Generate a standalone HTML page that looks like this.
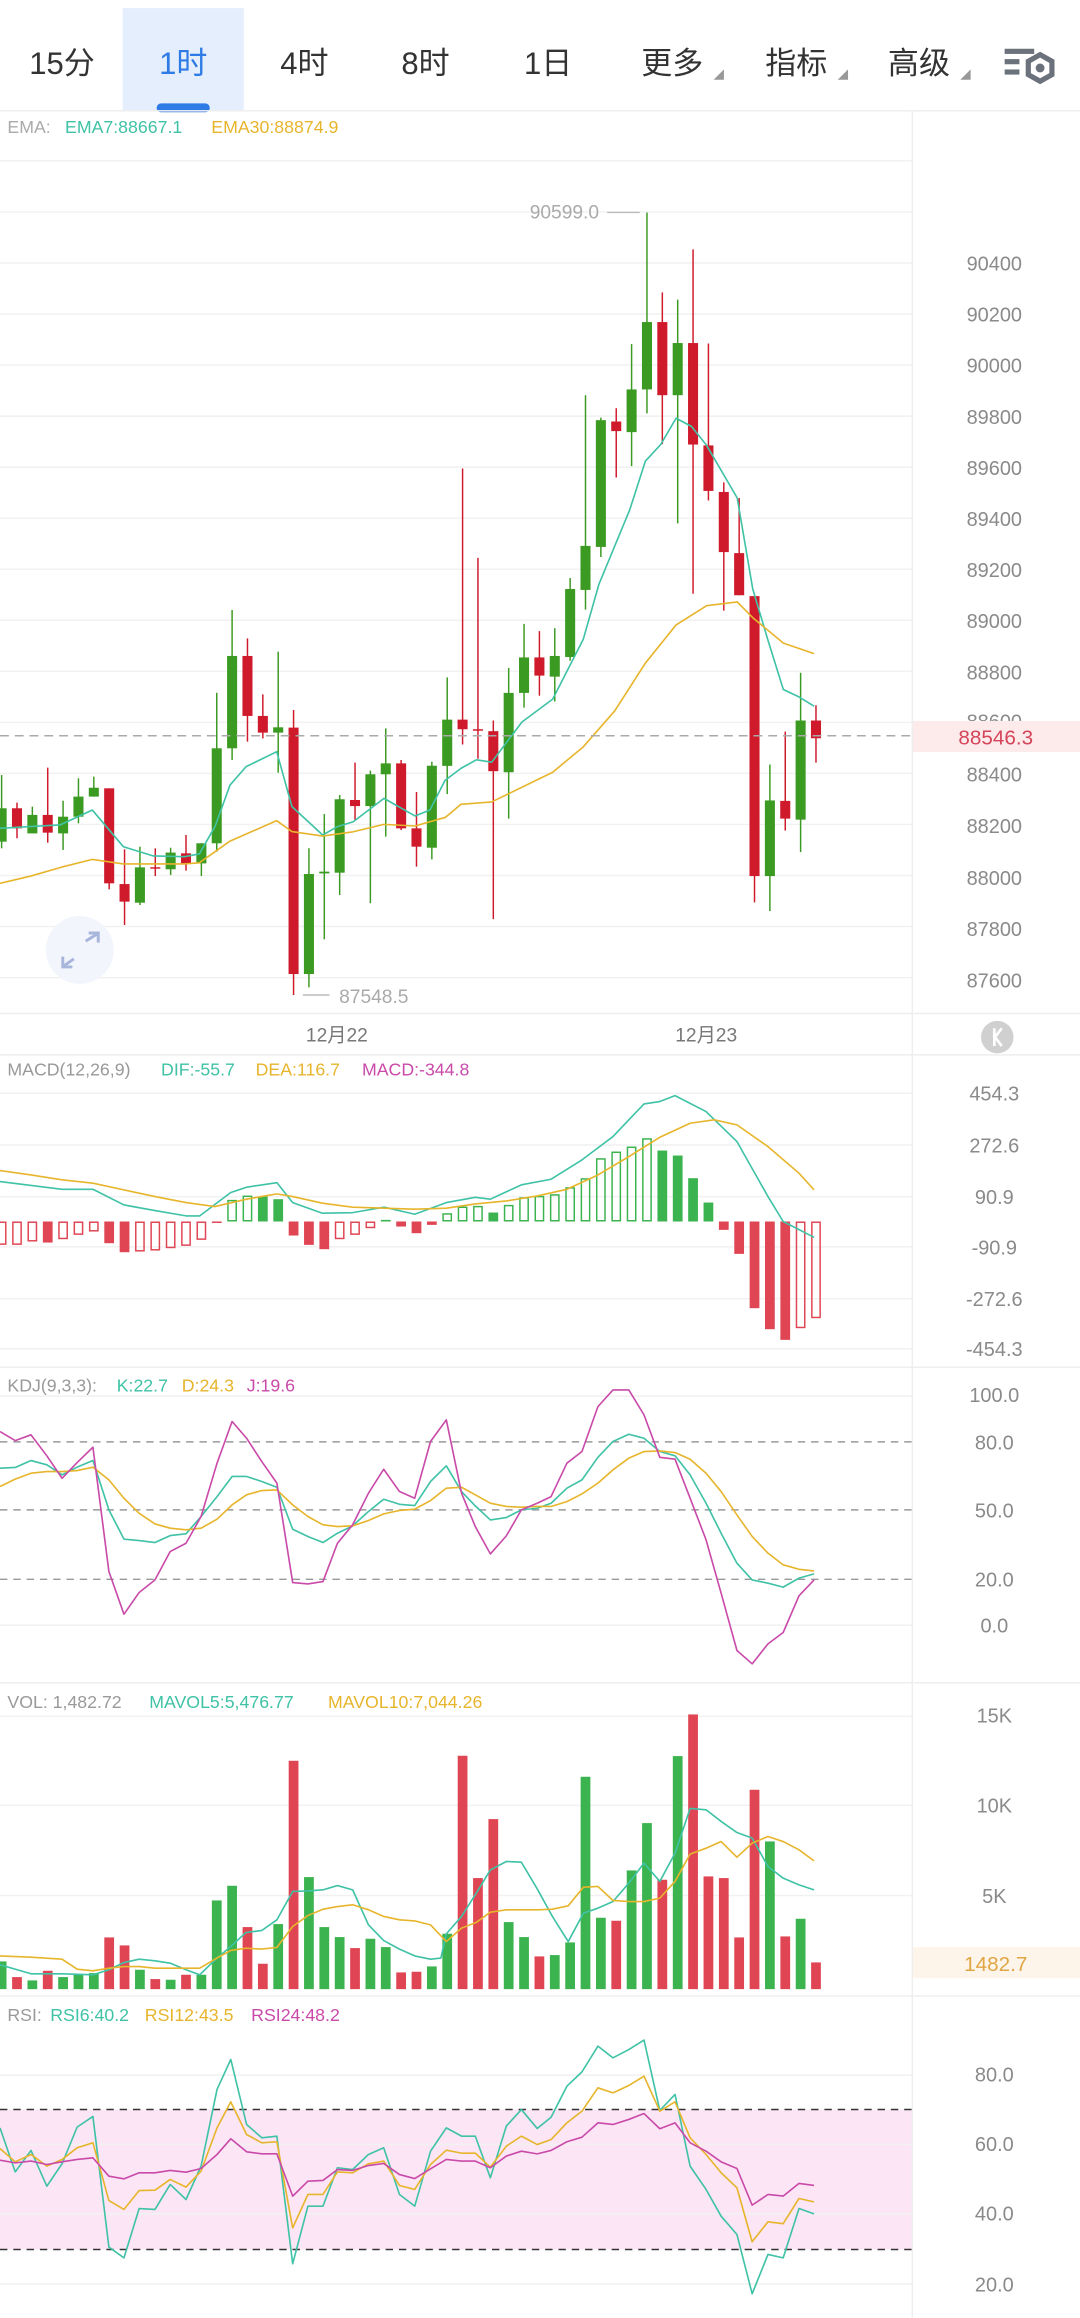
<!DOCTYPE html>
<html><head><meta charset="utf-8">
<style>
html,body{margin:0;padding:0;background:#fff;}
svg{display:block;}
text{font-family:"Liberation Sans","Noto Sans CJK SC",sans-serif;}
</style></head>
<body>
<svg id="s" xmlns="http://www.w3.org/2000/svg" width="1080" height="2318" viewBox="0 0 731 1569" preserveAspectRatio="none">
<rect width="731" height="1569" fill="#fff"/>
<!-- tab bar -->
<rect x="83" y="5.5" width="82" height="69" fill="#e4eefc"/>
<rect x="106" y="70" width="36" height="6" rx="3" fill="#2f7be5"/>
<g font-size="21" fill="#333" text-anchor="middle">
<text x="42" y="50">15分</text>
<text x="124" y="50" fill="#2f7be5">1时</text>
<text x="206" y="50">4时</text>
<text x="288" y="50">8时</text>
<text x="371" y="50">1日</text>
<text x="455" y="50">更多</text>
<text x="539" y="50">指标</text>
<text x="622" y="50">高级</text>
</g>
<g fill="#999"><path d="M483 54 L490 54 L490 47Z"/><path d="M567 54 L574 54 L574 47Z"/><path d="M650 54 L657 54 L657 47Z"/></g>
<g fill="#6b727c"><rect x="680" y="33" width="20" height="3.5"/><rect x="680" y="40" width="10" height="3.5"/><rect x="680" y="47" width="10" height="3.5"/>
<path d="M704 37 L712 41.5 L712 50.5 L704 55 L696 50.5 L696 41.5Z" fill="none" stroke="#6b727c" stroke-width="3.5"/><circle cx="704" cy="46" r="3"/></g>
<rect x="0" y="74.5" width="731" height="1" fill="#eee"/>
<g id="dyn"></g>
</svg>
<script>
var NS="http://www.w3.org/2000/svg",g=document.getElementById('dyn');
function el(t,a,txt){var e=document.createElementNS(NS,t);for(var k in a)e.setAttribute(k,a[k]);if(txt!=null)e.textContent=txt;g.appendChild(e);return e;}
function line(x1,y1,x2,y2,c,w,d){var a={x1:x1,y1:y1,x2:x2,y2:y2,stroke:c,'stroke-width':w||1};if(d)a['stroke-dasharray']=d;el('line',a);}
function txt(x,y,s,c,fs,anc){el('text',{x:x,y:y,fill:c,'font-size':fs||12,'text-anchor':anc||'start'},s);}
function poly(pts,Y0,c){var s=pts.map(function(p){return (p[0]/2.145).toFixed(1)+','+((Y0+p[1]/3)/1.4775).toFixed(1);}).join(' ');el('polyline',{points:s,fill:'none',stroke:c,'stroke-width':1.1,'stroke-linejoin':'round'});}
var TEAL='#3fc2a6',GOLD='#e7b52c',MAG='#c94aa9',GR='#3b9a21',RD='#cf1a2c',VG='#3bb34f',VR='#e04553',LG='#f1f1f1',AX='#8a8a8a';
// RSI band
el('rect',{x:0,y:1427.9,width:617,height:94.7,fill:'#fce6f5'});
// vertical divider
line(617.5,75,617.5,1569,'#eee',1);
// separators
[686,714,925.5,1139,1351].forEach(function(y){line(0,y,731,y,'#eee',1);});
// main gridlines
for(var k=-2;k<=14;k++){var y=178+k*34.55;if(y>100&&y<680)line(0,y,617,y,LG,1);}
var pl=[[90400,178],[90200,212.5],[90000,247],[89800,282],[89600,316.5],[89400,351],[89200,385.5],[89000,420],[88800,455],[88600,488],[88400,524],[88200,559],[88000,594],[87800,628.5],[87600,663.5]];
pl.forEach(function(p){txt(673,p[1]+5,String(p[0]),AX,13.5,'middle');});
txt(5,90,'EMA: ','#aaa',12);txt(44,90,'EMA7:88667.1',TEAL,12);txt(143,90,'EMA30:88874.9',GOLD,12);
// candles
var C=[[547.1,569.7,524.6,574.2,1],[547.1,560.7,543.3,567.4,0],[551.6,564.1,546,564.1,1],[551.6,563.6,519.6,570.4,0],[552.8,564.1,542,575.3,1],[539.2,552.8,526.8,557.3,1],[533.2,539.2,525.7,539.2,1],[533.6,597.9,533.6,602,0],[598.4,610.3,574.9,626.1,0],[587.1,611,573.1,612.6,1],[587,588,574.2,593,0],[577.1,588.4,573.8,592.3,1],[577.6,584.4,565.2,589.3,0],[570.8,584.4,570.8,593,1],[506.5,570.8,468.9,576.5,1],[444,506.5,412.9,514.4,1],[444,484.6,432.1,502,0],[484.6,495.9,470,499.8,0],[492.3,495.9,441.1,523,1],[492.5,659.3,480.6,673.5,0],[591.6,659.3,574.2,668.3,1],[590,591.2,551,635.8,1],[541,590.7,538.1,605.8,1],[541.5,545.6,516.2,555,0],[524.1,545.6,521.6,611.4,1],[516.7,524.1,493,566.3,1],[516.7,560.7,514.4,561.8,0],[560.7,573.1,536.1,586.6,0],[518.3,573.8,515.6,581.7,1],[487.1,518.4,458.5,537.5,1],[487.1,493.6,317.1,503.9,0],[493.6,494.6,377.6,513.6,0],[494.9,522,487.7,622.1,0],[469,522.7,452.1,554.1,1],[445,469,422.3,479,1],[445,457.3,427.2,470.9,0],[444,458,425.2,474.8,1],[398.7,444.7,391.2,447.2,1],[369.5,399.3,267.5,412.6,1],[284.4,370.2,282.7,377,1],[285.3,291.8,276.3,323.2,0],[263.6,292.5,232.9,315.5,1],[218,263.6,143.8,279.8,1],[218,267.5,197.9,300.6,0],[232.2,267.5,202.8,354.3,1],[232.2,300.9,168.8,401.9,0],[301.5,332.3,232.5,338.8,0],[333,373.7,326.5,413.3,0],[374.4,402.9,337.1,402.9,0],[403.5,593,403.5,610.8,0],[541.8,593,517.5,616.6,1],[542.1,554.1,495.2,562.2,0],[487.7,554.8,455.4,576.8,1],[487.7,499.7,477.4,516.2,0]];
function X(i){return 1.1+i*10.4;}
C.forEach(function(c,i){var x=X(i),col=c[4]?GR:RD;line(x,c[2],x,c[3],col,1);el('rect',{x:x-3.4,y:c[0],width:6.8,height:Math.max(1,c[1]-c[0]),fill:col});});
function pl2(pts,c){el('polyline',{points:pts.map(function(p){return p.join(',');}).join(' '),fill:'none',stroke:c,'stroke-width':1.1,'stroke-linejoin':'round'});}
pl2([[0,560.7],[20.3,559.5],[40.6,558.4],[62.5,548.3],[83.5,573.1],[103.8,579.4],[124.8,579.9],[134.9,578],[145.5,559.5],[155.7,531.4],[166.5,519],[187.3,508.8],[197.6,546],[218.4,565.2],[228.5,559.5],[239.1,556.2],[259.9,540.4],[280.9,552.3],[291,548.3],[301.2,528.2],[312,520.1],[322.4,514.3],[332.8,515.9],[353.3,488.7],[374.1,473.2],[394.8,432.7],[405.4,395.4],[426.2,345.2],[436.8,312.2],[447.2,300.9],[457.6,283.1],[468,288.6],[478.3,301.5],[499,337.1],[509.5,398.7],[519.6,432.7],[530.2,466.7],[540.4,471.5],[551,478]],TEAL);
pl2([[0,597.9],[20.8,593],[41.5,587],[62.5,581.7],[83.5,584.8],[124.8,584.8],[134.9,584],[155.7,569.3],[187.3,555.5],[197.6,562.9],[218.4,565.9],[239.1,563],[259.9,558],[280.9,559.1],[301.6,553.2],[312,544.4],[332.8,542.8],[374.1,522.7],[394.8,505.5],[416,481.3],[436.8,448.9],[457.6,423],[478.3,410],[499,407.4],[509.5,418.1],[530.2,435.3],[551,442.4]],GOLD);
// current price
line(0,498,617,498,'#aaa',1,'6 4');
el('rect',{x:618,y:488,width:113,height:21,fill:'#fdeaea'});
txt(674,504,'88546.3','#d4455a',14,'middle');
// max/min labels
txt(382,148,'90599.0','#aaa',13,'middle');line(411,143.8,433,143.8,'#bbb',1);
txt(253,679,'87548.5','#aaa',13,'middle');line(205,673.5,223,673.5,'#bbb',1);
// expand icon
el('circle',{cx:54,cy:643,r:23,fill:'#f2f5fb'});
el('path',{d:'M58 637 L66 632 M60 631.5 L66.5 631.5 L66.5 638 M50 649 L43 654 M42.5 647.5 L42.5 654.5 L49 654.5',stroke:'#a9b6dc','stroke-width':2,fill:'none'});
// dates
txt(228,705,'12月22','#777',13,'middle');txt(478,705,'12月23','#777',13,'middle');
el('circle',{cx:675,cy:702,r:11,fill:'#d0d0d0'});
el('path',{d:'M673 696 L673 708 M678 696 L673.5 702 L678 708',stroke:'#fff','stroke-width':1.8,fill:'none'});
// MACD
[740,775,810,844,879,913].forEach(function(y){line(0,y,617,y,LG,1);});
[['454.3',740],['272.6',775],['90.9',810],['-90.9',844],['-272.6',879],['-454.3',913]].forEach(function(p){txt(673,p[1]+5,p[0],AX,13.5,'middle');});
txt(5,728,'MACD(12,26,9)','#999',12);txt(109,728,'DIF:-55.7',TEAL,12);txt(173,728,'DEA:116.7',GOLD,12);txt(245,728,'MACD:-344.8',MAG,12);
var M=[[735,'h'],[735,'h'],[725,'h'],[728,'s'],[718,'h'],[705,'h'],[695,'h'],[730,'s'],[757,'s'],[755,'h'],[752,'h'],[745,'h'],[738,'h'],[720,'h'],[668,'s'],[600,'h'],[587,'h'],[590,'s'],[598,'s'],[707,'s'],[735,'s'],[748,'s'],[718,'h'],[705,'h'],[685,'h'],[660,'s'],[680,'s'],[700,'s'],[675,'s'],[640,'h'],[620,'h'],[618,'h'],[638,'s'],[615,'h'],[592,'h'],[588,'h'],[583,'h'],[562,'h'],[535,'h'],[475,'h'],[455,'h'],[440,'h'],[415,'h'],[452,'s'],[467,'s'],[535,'s'],[608,'s'],[690,'s'],[762,'s'],[925,'s'],[988,'s'],[1020,'s'],[985,'h'],[955,'h']];
var Z=826.8;
M.forEach(function(m,i){var y=676.8+m[0]/4.4325,x=X(i),col=y>Z?VR:VG,t=Math.min(y,Z),h=Math.max(1,Math.abs(y-Z));
 if(m[1]=='s')el('rect',{x:x-3.3,y:t,width:6.6,height:h,fill:col});else el('rect',{x:x-2.8,y:t+0.5,width:5.6,height:Math.max(0.5,h-1),fill:'none',stroke:col,'stroke-width':1});});
poly([[0,545],[90,568],[135,568],[180,615],[225,632],[270,648],[290,648],[335,578],[358,562],[402,548],[425,608],[468,640],[512,638],[558,622],[602,643],[648,608],[690,592],[712,598],[757,555],[800,538],[845,480],[890,410],[935,312],[958,305],[980,287],[1025,335],[1070,425],[1115,590],[1137,665],[1182,712]],1000,TEAL);
poly([[0,512],[45,525],[90,540],[135,550],[180,570],[225,590],[270,608],[312,620],[358,598],[402,582],[425,590],[468,610],[512,622],[558,625],[602,628],[648,625],[690,612],[735,603],[780,588],[823,568],[868,525],[913,470],[958,412],[1002,370],[1037,360],[1070,375],[1115,440],[1160,520],[1182,570]],1000,GOLD);
// KDJ
line(0,945,617,945,LG,1);line(0,1100,617,1100,LG,1);
[976,1022,1069].forEach(function(y){line(0,y,617,y,'#999',1,'5 4');});
[['100.0',944],['80.0',976],['50.0',1022],['20.0',1069],['0.0',1100]].forEach(function(p){txt(673,p[1]+5,p[0],AX,13.5,'middle');});
txt(5,942,'KDJ(9,3,3):','#999',12);txt(79,942,'K:22.7',TEAL,12);txt(123,942,'D:24.3',GOLD,12);txt(167,942,'J:19.6',MAG,12);
poly([[0,295],[22,293],[45,272],[68,285],[90,315],[112,292],[135,272],[158,420],[180,508],[202,512],[225,518],[247,497],[270,492],[292,440],[315,380],[337,320],[358,320],[380,335],[402,352],[425,478],[447,500],[469,518],[490,490],[512,468],[535,425],[557,388],[580,403],[602,407],[625,335],[648,288],[670,365],[690,408],[712,450],[735,443],[757,420],[780,415],[800,400],[823,355],[845,330],[868,262],[890,215],[913,193],[935,205],[958,245],[980,258],[1002,315],[1025,400],[1047,490],[1070,580],[1092,630],[1115,640],[1137,652],[1160,625],[1182,612]],1370,TEAL);
poly([[0,350],[22,328],[45,310],[68,305],[90,305],[112,302],[135,292],[158,330],[180,385],[202,430],[225,462],[247,475],[270,480],[292,475],[315,448],[337,405],[358,375],[380,362],[402,360],[425,405],[447,440],[469,465],[490,470],[512,468],[535,452],[557,432],[580,422],[602,418],[625,392],[648,355],[670,352],[690,375],[712,400],[735,410],[757,412],[780,410],[800,410],[823,395],[845,372],[868,340],[890,300],[913,265],[935,245],[958,243],[980,248],[1002,268],[1025,310],[1047,365],[1070,435],[1092,500],[1115,550],[1137,585],[1160,598],[1182,603]],1370,GOLD);
poly([[0,185],[22,212],[45,195],[68,258],[90,325],[112,278],[135,232],[158,605],[180,733],[202,668],[225,630],[247,545],[270,520],[292,440],[315,280],[337,155],[358,205],[380,275],[402,340],[425,638],[447,642],[469,635],[490,520],[512,465],[535,370],[557,298],[580,365],[602,385],[625,215],[648,150],[670,370],[690,470],[712,552],[735,498],[757,420],[780,400],[800,380],[823,280],[845,245],[868,110],[890,60],[913,60],[935,135],[958,262],[980,268],[1002,385],[1025,510],[1047,670],[1070,842],[1092,882],[1115,822],[1137,788],[1160,678],[1182,630]],1370,MAG);
// VOL
[1161.8,1222,1283].forEach(function(y){line(0,y,617,y,LG,1);});
[['15K',1161],['10K',1222],['5K',1283]].forEach(function(p){txt(673,p[1]+5,p[0],AX,13.5,'middle');});
el('rect',{x:618,y:1318,width:113,height:21,fill:'#fdf5ea'});txt(674,1334,'1482.7','#e0a545',14,'middle');
txt(5,1156,'VOL: 1,482.72','#999',12);txt(101,1156,'MAVOL5:5,476.77',TEAL,12);txt(222,1156,'MAVOL10:7,044.26',GOLD,12);
var V=[[845,1],[892,0],[902,1],[873,0],[892,1],[885,1],[880,1],[773,0],[797,0],[870,1],[898,0],[900,1],[885,0],[885,1],[662,1],[618,1],[742,0],[852,0],[733,1],[243,0],[592,1],[742,1],[772,1],[805,0],[777,1],[802,1],[878,0],[876,0],[860,1],[762,1],[228,0],[595,0],[418,0],[727,1],[772,1],[830,0],[826,1],[788,1],[291,1],[714,1],[723,0],[572,1],[430,1],[600,0],[229,1],[104,0],[590,0],[595,0],[773,0],[330,0],[485,1],[770,0],[717,1],[848,0]];
V.forEach(function(v,i){var y=1137+v[0]/4.4325;el('rect',{x:X(i)-3.3,y:y,width:6.6,height:1346.4-y,fill:v[1]?VG:VR});});
poly([[0,855],[45,882],[90,882],[135,885],[158,870],[180,848],[202,838],[225,843],[247,850],[270,870],[290,885],[312,840],[335,800],[357,758],[380,752],[402,720],[425,635],[447,633],[469,630],[490,617],[512,630],[535,735],[557,782],[580,808],[602,828],[625,838],[640,835],[648,762],[670,710],[692,638],[712,570],[735,545],[757,547],[780,627],[802,710],[825,785],[847,700],[868,685],[890,665],[913,610],[935,550],[958,605],[980,520],[1002,386],[1025,390],[1047,425],[1070,458],[1092,475],[1115,560],[1137,595],[1160,615],[1182,630]],1680,TEAL);
poly([[0,828],[45,832],[90,838],[112,868],[135,873],[158,865],[180,860],[202,860],[225,865],[247,865],[290,865],[312,838],[335,812],[357,805],[380,808],[402,803],[425,740],[447,707],[469,688],[490,680],[512,675],[535,690],[557,710],[580,720],[602,723],[625,735],[648,785],[670,745],[692,727],[712,697],[735,690],[757,690],[780,690],[802,688],[825,678],[847,622],[868,620],[890,662],[913,665],[935,665],[958,655],[980,605],[1002,523],[1025,505],[1047,485],[1070,532],[1092,490],[1115,470],[1137,485],[1160,510],[1182,543]],1680,GOLD);
// RSI
[1404.6,1451.5,1498.5,1546].forEach(function(y){line(0,y,617,y,LG,1);});
line(0,1427.9,617,1427.9,'#333',1,'5 4');line(0,1522.6,617,1522.6,'#333',1,'5 4');
[['80.0',1404],['60.0',1451],['40.0',1498],['20.0',1546]].forEach(function(p){txt(673,p[1]+5,p[0],AX,13.5,'middle');});
txt(5,1368,'RSI:','#999',12);txt(34,1368,'RSI6:40.2',TEAL,12);txt(98,1368,'RSI12:43.5',GOLD,12);txt(170,1368,'RSI24:48.2',MAG,12);
poly([[0,390],[22,522],[45,458],[68,565],[90,498],[112,388],[135,356],[158,748],[180,780],[202,632],[225,635],[247,560],[270,605],[292,505],[315,275],[335,185],[358,380],[380,420],[402,415],[425,798],[447,625],[469,625],[490,510],[512,515],[535,470],[557,450],[580,590],[602,625],[625,460],[648,390],[670,415],[690,415],[712,540],[735,385],[757,335],[780,392],[800,358],[823,265],[845,222],[868,145],[890,180],[913,155],[935,127],[958,338],[980,290],[1002,505],[1025,575],[1047,655],[1070,710],[1092,888],[1115,770],[1137,780],[1160,632],[1182,648]],1998,TEAL);
poly([[0,452],[22,492],[45,470],[68,505],[90,485],[112,450],[135,435],[158,608],[180,635],[202,578],[225,577],[247,545],[270,568],[292,520],[315,390],[335,312],[358,410],[380,435],[402,432],[425,690],[447,590],[469,590],[490,522],[512,525],[535,498],[557,490],[580,563],[602,575],[625,500],[648,457],[670,466],[690,466],[712,508],[735,445],[757,415],[780,440],[800,425],[823,375],[845,340],[868,270],[890,285],[913,263],[935,235],[958,340],[980,312],[1002,420],[1025,470],[1047,525],[1070,570],[1092,732],[1115,672],[1137,678],[1160,602],[1182,612]],1998,GOLD);
poly([[0,487],[22,495],[45,490],[68,500],[90,492],[112,485],[135,480],[158,535],[180,543],[202,525],[225,525],[247,518],[270,523],[292,512],[315,470],[335,423],[358,462],[380,468],[402,468],[425,595],[447,550],[469,548],[490,515],[512,518],[535,503],[557,497],[580,530],[602,542],[625,513],[648,485],[670,490],[690,490],[712,510],[735,475],[757,460],[780,468],[800,458],[823,432],[845,418],[868,375],[890,380],[913,365],[935,347],[958,393],[980,375],[1002,435],[1025,460],[1047,492],[1070,512],[1092,622],[1115,590],[1137,595],[1160,557],[1182,563]],1998,MAG);
</script>
</body></html>
